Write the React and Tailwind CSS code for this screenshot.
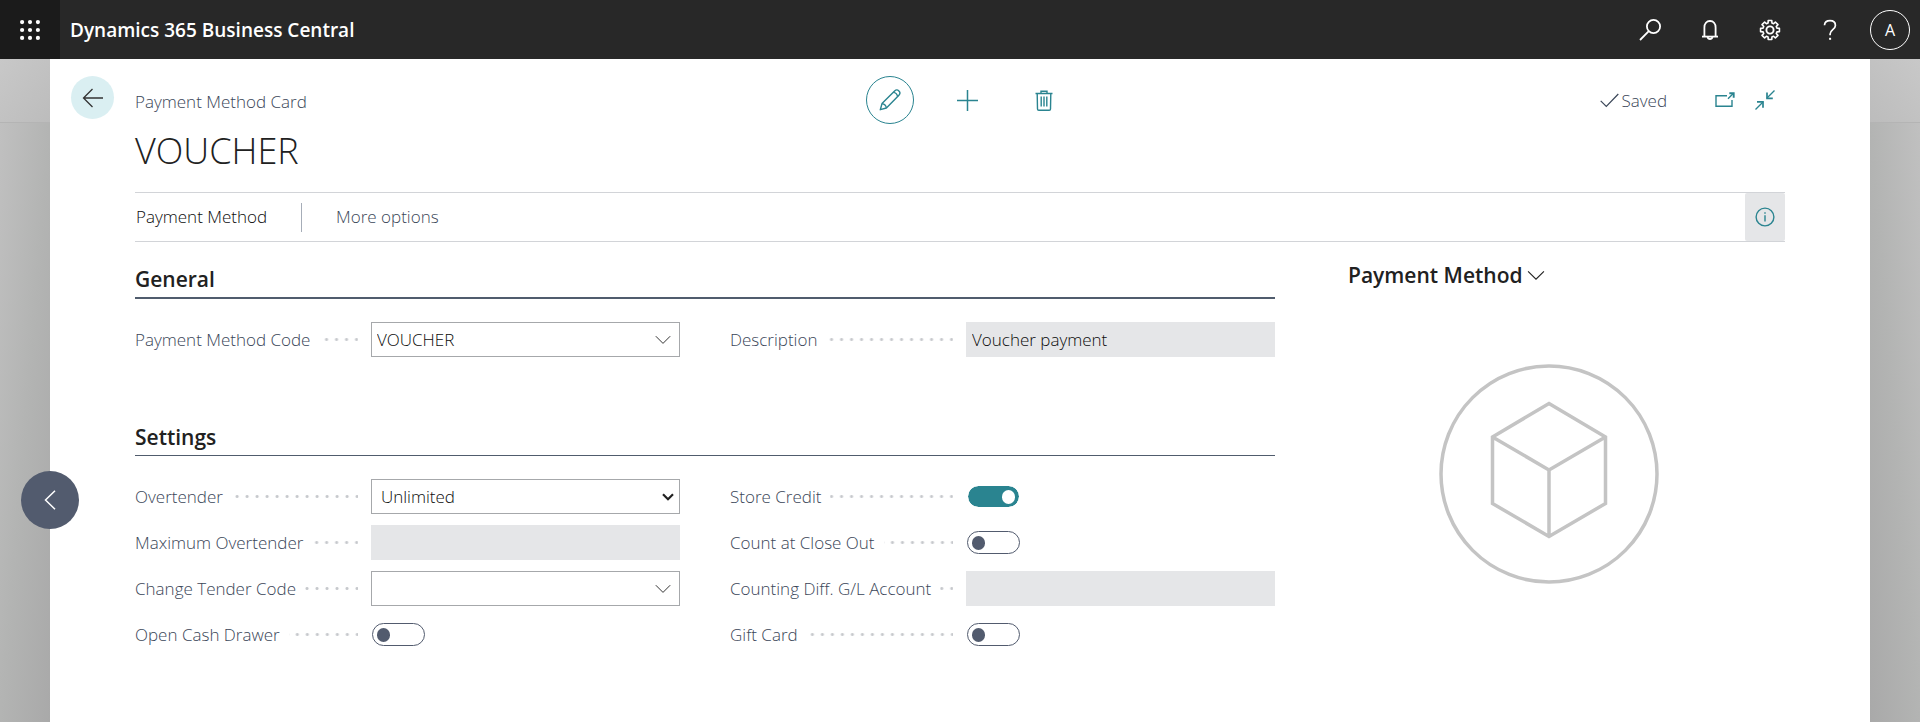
import { useState } from "react";

function Svg({ w, h, children, className = "", sw = 1.5 }) {
  return (
    <svg
      width={w}
      height={h}
      viewBox={`0 0 ${w} ${h}`}
      fill="none"
      stroke="currentColor"
      strokeWidth={sw}
      className={`shrink-0 ${className}`}
      aria-hidden="true"
    >
      {children}
    </svg>
  );
}

function Waffle() {
  const steps = [2, 9.5, 17];
  return (
    <svg width="20" height="20" viewBox="0 0 19 19" fill="currentColor" aria-hidden="true">
      {steps.flatMap((y) => steps.map((x) => <circle key={`${x}-${y}`} cx={x} cy={y} r="2" />))}
    </svg>
  );
}

const SearchIcon = () => (
  <Svg w={22} h={22} sw={1.8}>
    <circle cx="14.5" cy="7.5" r="6.6" />
    <path d="M9.8 12.2 1 21" />
  </Svg>
);

const BellIcon = () => (
  <Svg w={18} h={22} sw={1.8}>
    <path d="M3.4 17.6V8.4C3.4 4.6 5.6 2 9 2s5.6 2.6 5.6 6.4v9.2" />
    <path d="M1 17.6h16" />
    <path d="M6.6 18c.3 1.4 1.200 2 2.400 2s2.100-.6 2.400-2" />
  </Svg>
);

function GearIcon() {
  const pts = [];
  for (let i = 0; i < 8; i++) {
    const c = (i * Math.PI) / 4 - Math.PI / 2;
    [
      [-0.27, 7.2],
      [-0.19, 9.6],
      [0.19, 9.6],
      [0.27, 7.2],
    ].forEach(([d, r]) => {
      pts.push(`${(11 + r * Math.cos(c + d)).toFixed(2)} ${(11 + r * Math.sin(c + d)).toFixed(2)}`);
    });
  }
  return (
    <Svg w={22} h={22} sw={1.6}>
      <path d={`M${pts.join("L")}Z`} strokeLinejoin="round" />
      <circle cx="11" cy="11" r="3.6" strokeWidth="1.9" />
    </Svg>
  );
}

const HelpIcon = () => (
  <Svg w={14} h={22} sw={1.7}>
    <path d="M1.500 6.200C1.700 3.300 3.900 1.700 7 1.700c3.300 0 5.400 1.800 5.400 4.700 0 4.200-5.300 4.400-5.300 8.600v1.200" />
    <path d="M7.100 18.800v2" strokeWidth="2" />
  </Svg>
);

const BackIcon = () => (
  <Svg w={22} h={20} sw={1.3}>
    <path d="M10.500 1 1.500 10l9 9M1.500 10H21" />
  </Svg>
);

const PencilIcon = () => (
  <Svg w={22} h={22} sw={1.4}>
    <path d="M1.300 20.700 3 14.600 15.600 2c1.300-1.300 3.100-1.300 4.300-.1 1.300 1.300 1.200 3.100 0 4.400L7.400 19Z" strokeLinejoin="round" />
    <path d="M3 14.600c2.600.3 4 1.700 4.400 4.400M14.200 3.400c2.600.3 4 1.700 4.400 4.300" />
  </Svg>
);

const PlusIcon = () => (
  <Svg w={21} h={21} sw={1.5}>
    <path d="M10.500 0v21M0 10.500h21" />
  </Svg>
);

const TrashIcon = () => (
  <Svg w={18} h={21} sw={1.4}>
    <path d="M.5 3.500h17M6 3.500V1.200h6v2.300M2.200 3.500l.3 15.400c0 .8.5 1.300 1.300 1.300h10.400c.8 0 1.300-.5 1.300-1.300l.3-15.400" />
    <path d="M6.200 6.500v10M9 6.500v10M11.800 6.500v10" />
  </Svg>
);

const CheckIcon = () => (
  <Svg w={19} h={15} sw={1.2}>
    <path d="m.7 7.800 5.600 5.700L18.300 1" />
  </Svg>
);

const PopOutIcon = () => (
  <Svg w={20} h={16} sw={1.4}>
    <path d="M12 3.700H1v10.600h16V8M13 6.800l5.500-5.500" />
    <path d="M14.300 1.300h4.400v4.400" strokeWidth="1.900" />
  </Svg>
);

const CollapseIcon = () => (
  <Svg w={20} h={20} sw={1.4}>
    <path d="M19.500.5 12 8M.5 19.500 8 12" />
    <path d="M12 2.600V8.300h5.800M2 11.900h6v5.800" strokeWidth="1.700" />
  </Svg>
);

const InfoIcon = () => (
  <Svg w={20} h={20} sw={1.4}>
    <circle cx="10" cy="10" r="8.900" />
    <path d="M10 8.200v6.200M10 5.300v1.500" />
  </Svg>
);

const ChevronDown = ({ w = 16 }) => (
  <svg width={w} height={w / 2 + 2} viewBox="0 0 16 10" fill="none" stroke="currentColor" strokeWidth="1" className="shrink-0" aria-hidden="true">
    <path d="m.8 1.200 7.200 7.200 7.200-7.200" />
  </svg>
);

const CubePicture = () => (
  <svg viewBox="0 0 220 220" className="w-[220px]" fill="none" stroke="#c4c4c4" strokeWidth="3.500" role="img" aria-label="No picture">
    <circle cx="110" cy="110" r="108" />
    <path d="M110 39.500 166.500 73v66.500L110 172.500 53.500 139.500V73ZM53.500 73l56.500 33 56.500-33M110 106v66.500" />
  </svg>
);

function TopButton({ label, children }) {
  return (
    <button type="button" aria-label={label} className="flex h-full w-[60px] items-center justify-center text-white">
      {children}
    </button>
  );
}

function Row({ id, label, children }) {
  return (
    <div className="flex h-[35px] items-center">
      <div className="flex w-[236px] shrink-0 items-center pr-[13px]">
        <label htmlFor={id} className="whitespace-nowrap text-[#3a4658]">
          {label}
        </label>
        <span className="ml-[9px] h-[3px] flex-1 bg-[radial-gradient(circle,#c6c8cc_1px,transparent_2px)] bg-[length:10px_3px] bg-[position:right_-4px_top] bg-repeat-x" />
      </div>
      <div className="flex h-full flex-1 items-center">{children}</div>
    </div>
  );
}

function Lookup({ id, label, initial = "" }) {
  const [value, setValue] = useState(initial);
  return (
    <Row id={id} label={label}>
      <div className="flex h-full w-full items-center border border-[#a6a8ab] bg-white pr-2">
        <input id={id} value={value} onChange={(e) => setValue(e.target.value)} className="h-full min-w-0 flex-1 px-[5px] text-[#0c0c0c] outline-none" />
        <button type="button" aria-label={`Choose ${label}`} className="text-[#333]">
          <ChevronDown />
        </button>
      </div>
    </Row>
  );
}

function Dropdown({ id, label, options }) {
  return (
    <Row id={id} label={label}>
      <div className="relative h-full w-full">
        <select id={id} className="h-full w-full appearance-none border border-[#a6a8ab] bg-white pr-6 pl-[9px] text-[#0c0c0c]">
          {options.map((o) => (
            <option key={o}>{o}</option>
          ))}
        </select>
        <span className="pointer-events-none absolute inset-y-0 right-[6px] flex items-center text-[#212121]">
          <Svg w={12} h={8} sw={2.2}>
            <path d="m1 1.200 5 5 5-5" />
          </Svg>
        </span>
      </div>
    </Row>
  );
}

function ReadOnly({ id, label, value = "" }) {
  return (
    <Row id={id} label={label}>
      <input id={id} value={value} readOnly className="h-full w-full bg-[#e5e6e8] px-[6px] text-[#0c0c0c] outline-none" />
    </Row>
  );
}

function Toggle({ id, label, initial = false }) {
  const [on, setOn] = useState(initial);
  return (
    <Row id={id} label={label}>
      <input
        id={id}
        type="checkbox"
        role="switch"
        checked={on}
        onChange={(e) => setOn(e.target.checked)}
        className="ml-px flex h-[23px] w-[53px] appearance-none items-center rounded-full border border-[#525b6e] px-1 before:h-[14px] before:w-[13px] before:rounded-full before:bg-[#525b6e] checked:justify-end checked:border-white checked:bg-[#2a8490] checked:bg-clip-padding checked:before:bg-white"
      />
    </Row>
  );
}

function Section({ title, strong, children }) {
  return (
    <section>
      <h2 className={`pb-1 text-[21px] leading-7 font-semibold text-[#212121] ${strong ? "border-b-2 border-[#505c6d]" : "border-b border-[#505c6d]"}`}>{title}</h2>
      <div className="mt-[23px] grid grid-cols-2 gap-x-[50px]">{children}</div>
    </section>
  );
}

export default function App() {
  return (
    <div className="flex min-h-screen flex-col bg-white font-['Open_Sans','Noto_Sans',sans-serif] text-[17px] leading-6 font-light">
      <header className="flex h-[59px] items-center bg-[#282828] text-white">
        <button type="button" aria-label="App launcher" className="flex h-full w-[60px] items-center justify-center bg-[#1b1b1b]">
          <Waffle />
        </button>
        <div className="ml-[10px] flex-1 text-[19px] font-semibold">Dynamics 365 Business Central</div>
        <TopButton label="Search"><SearchIcon /></TopButton>
        <TopButton label="Notifications"><BellIcon /></TopButton>
        <TopButton label="Settings"><GearIcon /></TopButton>
        <TopButton label="Help"><HelpIcon /></TopButton>
        <TopButton label="Account">
          <span className="flex size-10 items-center justify-center rounded-full border border-white text-base font-normal">A</span>
        </TopButton>
      </header>

      <div className="flex flex-1">
        <div className="flex w-[50px] shrink-0 flex-col">
          <div className="h-16 border-b border-[#b4b4b4] bg-linear-to-br from-[#c8c8c8] to-[#bcbcbc]" />
          <div className="flex-1 bg-linear-to-br from-[#c0c0c0] via-[#b3b4b3] to-[#a9a9a9]" />
        </div>

        <main className="relative flex flex-1 gap-[21px] bg-white pr-[85px] pl-[21px]">
          <button type="button" aria-label="Previous record" className="absolute top-[412px] -left-[29px] flex size-[58px] items-center justify-center rounded-full bg-[#525b6e] text-white">
            <Svg w={12} h={20} sw={1.5}>
              <path d="M11 .7 1.500 10l9.500 9.300" />
            </Svg>
          </button>

          <button type="button" aria-label="Back" className="mt-[17px] flex size-[43px] shrink-0 items-center justify-center rounded-full bg-[#daeff2] text-[#333]">
            <BackIcon />
          </button>

          <div className="flex-1">
            <div className="mt-[17px] grid grid-cols-[1fr_auto_1fr] items-center">
              <div className="pt-1 text-[#3a4658]">Payment Method Card</div>
              <div className="flex gap-[29px] pl-[14px] text-[#2a8490]">
                <button type="button" aria-label="Edit" className="flex size-12 items-center justify-center rounded-full border border-[#2a8490]"><PencilIcon /></button>
                <button type="button" aria-label="New" className="flex size-12 items-center justify-center"><PlusIcon /></button>
                <button type="button" aria-label="Delete" className="flex size-12 items-center justify-center"><TrashIcon /></button>
              </div>
              <div className="flex items-center justify-end pr-[10px] text-[#2a8490]">
                <div className="flex items-center gap-[2px] text-[#3a4658]"><CheckIcon /><span className="pt-[2px]">Saved</span></div>
                <button type="button" aria-label="Open in new window" className="ml-12"><PopOutIcon /></button>
                <button type="button" aria-label="Collapse" className="ml-5"><CollapseIcon /></button>
              </div>
            </div>

            <h1 className="mt-[2px] text-[36px] leading-[50px] font-light text-[#212121]">VOUCHER</h1>

            <div className="mt-4 flex h-[50px] items-center border-y border-[#d2d4d8]">
              <button type="button" className="pl-px text-[#0c0c0c]">Payment Method</button>
              <span className="ml-[34px] h-[29px] w-px bg-[#a6adb8]" />
              <button type="button" className="ml-[34px] text-[#3a4658]">More options</button>
              <button type="button" aria-label="Details" className="ml-auto flex h-full w-10 items-center justify-center rounded-xs bg-[#e5e6e8] text-[#2a8490]"><InfoIcon /></button>
            </div>

            <div className="flex">
              <div className="flex flex-1 flex-col gap-[66px] pt-[23px] pb-[70px]">
                <Section title="General" strong>
                  <Lookup id="code" label="Payment Method Code" initial="VOUCHER" />
                  <ReadOnly id="description" label="Description" value="Voucher payment" />
                </Section>
                <Section title="Settings">
                  <div className="flex flex-col gap-[11px]">
                    <Dropdown id="overtender" label="Overtender" options={["Unlimited"]} />
                    <ReadOnly id="max-overtender" label="Maximum Overtender" />
                    <Lookup id="change-tender" label="Change Tender Code" />
                    <Toggle id="cash-drawer" label="Open Cash Drawer" />
                  </div>
                  <div className="flex flex-col gap-[11px]">
                    <Toggle id="store-credit" label="Store Credit" initial />
                    <Toggle id="count-close" label="Count at Close Out" />
                    <ReadOnly id="diff-account" label="Counting Diff. G/L Account" />
                    <Toggle id="gift-card" label="Gift Card" />
                  </div>
                </Section>
              </div>

              <aside className="ml-[73px] w-[437px] pt-[19px] pr-[35px]">
                <button type="button" className="flex items-center gap-1 text-[21px] leading-7 font-semibold text-[#212121]">
                  Payment Method
                  <ChevronDown w={18} />
                </button>
                <div className="mt-[75px] flex justify-center"><CubePicture /></div>
              </aside>
            </div>
          </div>
        </main>

        <div className="flex w-[50px] shrink-0 flex-col">
          <div className="h-16 border-b border-[#b4b4b4] bg-linear-to-bl from-[#c8c8c8] to-[#bcbcbc]" />
          <div className="flex-1 bg-linear-to-bl from-[#c0c0c0] via-[#b3b4b3] to-[#a9a9a9]" />
        </div>
      </div>
    </div>
  );
}
